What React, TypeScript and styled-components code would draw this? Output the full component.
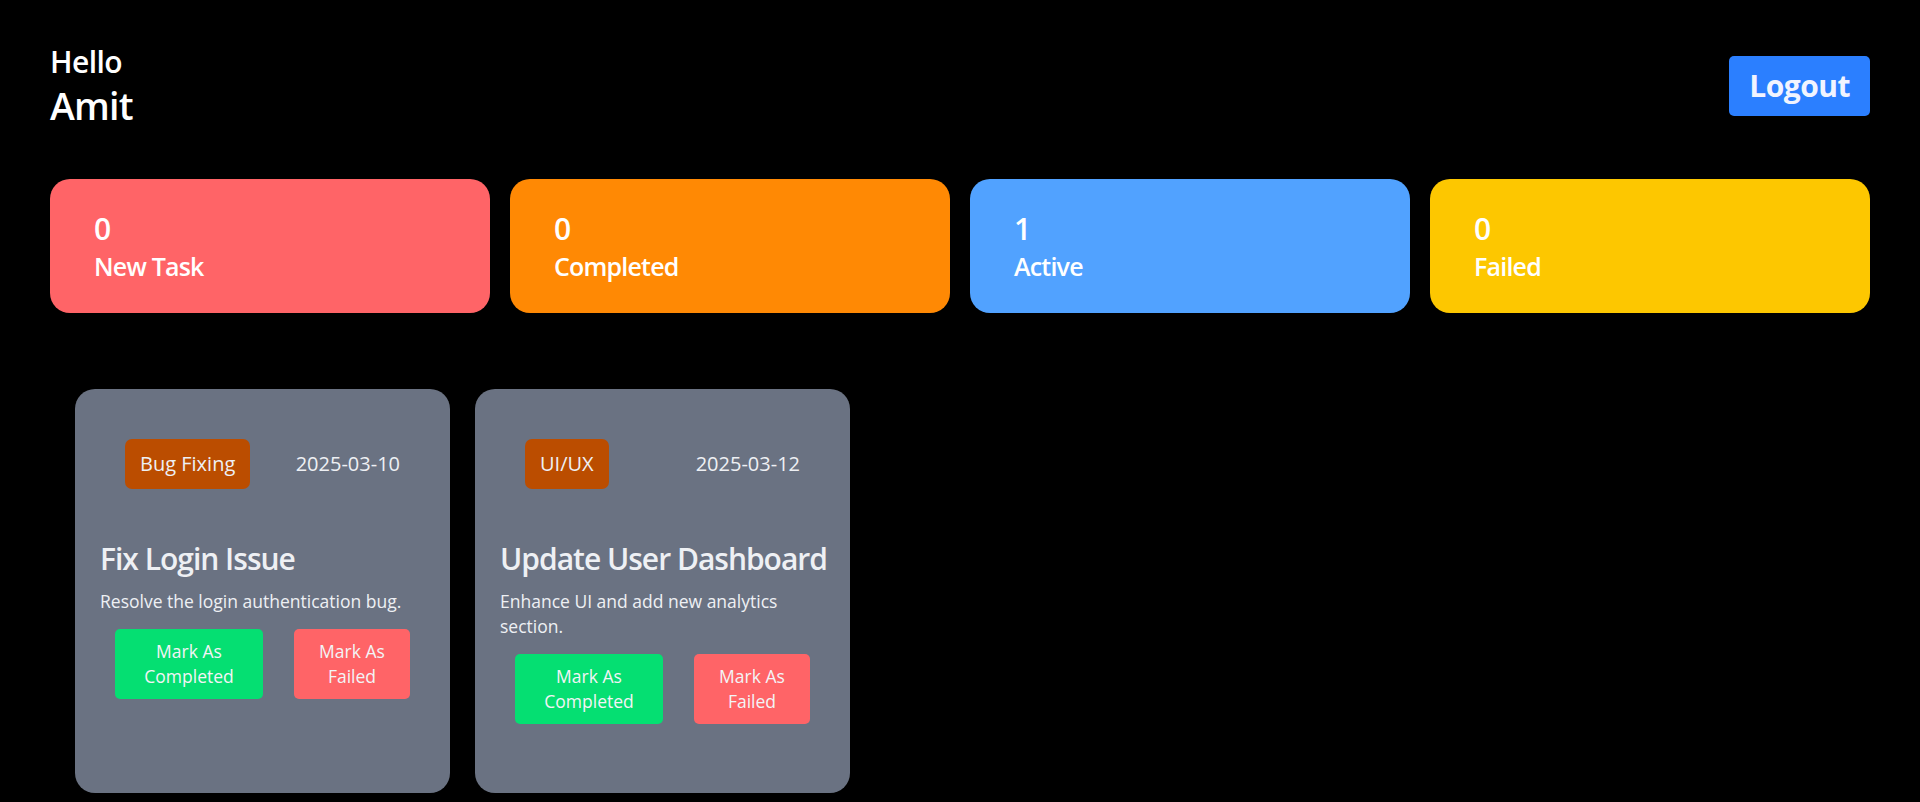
import React from "react";
import styled, { createGlobalStyle } from "styled-components";

const GlobalStyle = createGlobalStyle`
  * { box-sizing: border-box; margin: 0; padding: 0; }
  html, body { background: #000; }
  body {
    font-family: "Segoe UI", "Open Sans", sans-serif;
    color: #fff;
    overflow: hidden;
  }
`;

const Page = styled.main`
  min-height: 100vh;
  padding: 42px 50px 0;
  background: #000;
`;

const Header = styled.header`
  display: flex;
  align-items: center;
  justify-content: space-between;
`;

const Greeting = styled.h1`
  display: flex;
  flex-direction: column;
  font-weight: 600;
  color: #fff;
`;

const Hello = styled.span`
  font-size: 30px;
  line-height: 40px;
  letter-spacing: -0.6px;
`;

const Name = styled.span`
  font-size: 37.5px;
  line-height: 48px;
  letter-spacing: -0.8px;
`;

const LogoutButton = styled.button`
  background: #2b7fff;
  color: #f1f4ff;
  border: none;
  border-radius: 5px;
  padding: 10px 20px;
  font-family: inherit;
  font-size: 30px;
  line-height: 40px;
  font-weight: 700;
  letter-spacing: -0.5px;
  cursor: pointer;
`;

const Stats = styled.section`
  display: grid;
  grid-template-columns: repeat(4, 1fr);
  gap: 20px;
  margin-top: 49px;
`;

const StatCard = styled.div<{ $bg: string }>`
  background: ${(p) => p.$bg};
  border-radius: 20px;
  height: 134px;
  padding: 30px 44px;
  color: #fff;
`;

const StatCount = styled.h2`
  font-size: 30px;
  line-height: 40px;
  font-weight: 600;
`;

const StatLabel = styled.h3`
  font-size: 25px;
  line-height: 35px;
  font-weight: 600;
  letter-spacing: -0.8px;
`;

const TaskList = styled.section`
  display: flex;
  gap: 25px;
  margin-top: 76px;
  padding: 0 25px;
`;

const TaskCard = styled.article`
  flex-shrink: 0;
  width: 375px;
  height: 404px;
  padding: 25px;
  background: #6a7282;
  border-radius: 20px;
  color: #eef0f4;
`;

const TaskHead = styled.div`
  display: flex;
  align-items: center;
  justify-content: space-between;
  padding: 25px;
`;

const Category = styled.span`
  background: #bb4d00;
  border-radius: 7px;
  padding: 10px 15px;
  font-size: 20px;
  line-height: 30px;
`;

const TaskDate = styled.span`
  font-size: 20px;
  line-height: 30px;
`;

const TaskTitle = styled.h2`
  margin-top: 25px;
  font-size: 30px;
  line-height: 40px;
  font-weight: 600;
  letter-spacing: -1px;
  white-space: nowrap;
`;

const TaskDesc = styled.p`
  margin-top: 10px;
  font-size: 17.5px;
  line-height: 25px;
`;

const Actions = styled.div`
  display: flex;
  justify-content: space-between;
  margin-top: 15px;
  padding: 0 15px;
`;

const ActionButton = styled.button<{ $bg: string; $w: number }>`
  width: ${(p) => p.$w}px;
  background: ${(p) => p.$bg};
  color: #f3f4f6;
  border: none;
  border-radius: 5px;
  padding: 10px 20px;
  font-family: inherit;
  font-size: 17.5px;
  line-height: 25px;
  text-align: center;
  cursor: pointer;
`;

const stats = [
  { count: 0, label: "New Task", bg: "#ff6467" },
  { count: 0, label: "Completed", bg: "#ff8904" },
  { count: 1, label: "Active", bg: "#51a2ff" },
  { count: 0, label: "Failed", bg: "#fdc700" },
];

const tasks = [
  {
    category: "Bug Fixing",
    date: "2025-03-10",
    title: "Fix Login Issue",
    description: "Resolve the login authentication bug.",
  },
  {
    category: "UI/UX",
    date: "2025-03-12",
    title: "Update User Dashboard",
    description: "Enhance UI and add new analytics section.",
  },
];

export default function App() {
  return (
    <>
      <GlobalStyle />
      <Page>
        <Header>
          <Greeting>
            <Hello>Hello</Hello>
            <Name>Amit</Name>
          </Greeting>
          <LogoutButton>Logout</LogoutButton>
        </Header>

        <Stats>
          {stats.map((s) => (
            <StatCard key={s.label} $bg={s.bg}>
              <StatCount>{s.count}</StatCount>
              <StatLabel>{s.label}</StatLabel>
            </StatCard>
          ))}
        </Stats>

        <TaskList>
          {tasks.map((t) => (
            <TaskCard key={t.title}>
              <TaskHead>
                <Category>{t.category}</Category>
                <TaskDate>{t.date}</TaskDate>
              </TaskHead>
              <TaskTitle>{t.title}</TaskTitle>
              <TaskDesc>{t.description}</TaskDesc>
              <Actions>
                <ActionButton $bg="#05df72" $w={148}>
                  Mark As Completed
                </ActionButton>
                <ActionButton $bg="#ff6467" $w={116}>
                  Mark As Failed
                </ActionButton>
              </Actions>
            </TaskCard>
          ))}
        </TaskList>
      </Page>
    </>
  );
}
